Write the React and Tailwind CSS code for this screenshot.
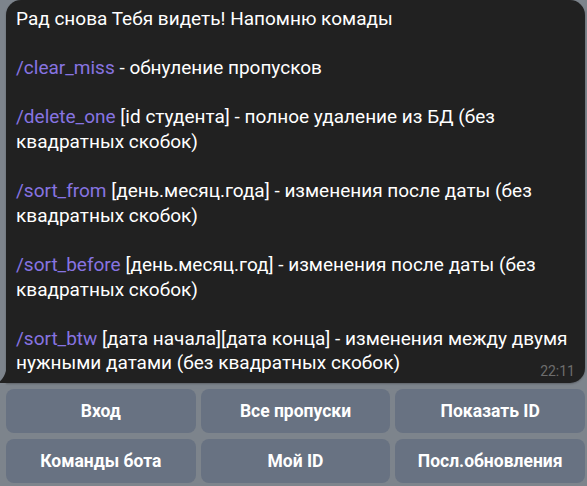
import React from "react";

const L = ({ cmd, children }) => (
  <div className="whitespace-nowrap">
    {cmd && <span className="text-[#8774e1]">{cmd}</span>}
    {children}
  </div>
);
const Blank = () => <div>&nbsp;</div>;

const buttons = ["Вход", "Все пропуски", "Показать ID", "Команды бота", "Мой ID", "Посл.обновления"];

export default function App() {
  return (
    <div
      className="w-[587px] h-[486px] bg-[#7d848c] overflow-hidden flex flex-col"
      style={{ fontFamily: "Roboto, 'Noto Sans', sans-serif" }}
    >
      <div className="pl-[6px] pr-[2px]">
        <div className="relative bg-[#212121] rounded-[15px] rounded-bl-none pl-[10px] pr-[10px] pt-[7px] pb-[7px] text-white text-[19px] leading-[24.6px] shadow-[0_1px_2px_rgba(0,0,0,0.25)]">
          <svg
            className="absolute left-[-7px] bottom-0"
            width="8"
            height="20"
            viewBox="0 0 8 20"
          >
            <path d="M8 0 C8 8 5 15 0.6 18.6 Q0 19.3 0.8 20 L8 20 Z" fill="#212121" />
          </svg>
          <L>Рад снова Тебя видеть! Напомню комады</L>
          <Blank />
          <L cmd="/clear_miss"> - обнуление пропусков</L>
          <Blank />
          <L cmd="/delete_one"> [id студента] - полное удаление из БД (без</L>
          <L>квадратных скобок)</L>
          <Blank />
          <L cmd="/sort_from"> [день.месяц.года] - изменения после даты (без</L>
          <L>квадратных скобок)</L>
          <Blank />
          <L cmd="/sort_before"> [день.месяц.год] - изменения после даты (без</L>
          <L>квадратных скобок)</L>
          <Blank />
          <L cmd="/sort_btw"> [дата начала][дата конца] - изменения между двумя</L>
          <L>нужными датами (без квадратных скобок)</L>
          <span className="absolute right-[10px] bottom-[5px] text-[14px] leading-[14px] text-[#6d6d6d]">
            22:11
          </span>
        </div>
      </div>
      <div className="grid grid-cols-3 gap-x-[5px] gap-y-[6px] pl-[6px] pr-[2px] mt-[6px]">
        {buttons.map((b) => (
          <div
            key={b}
            className="h-[44px] rounded-[8px] bg-[#687282] flex items-center justify-center text-white text-[17.5px] font-bold"
          >
            {b}
          </div>
        ))}
      </div>
    </div>
  );
}
